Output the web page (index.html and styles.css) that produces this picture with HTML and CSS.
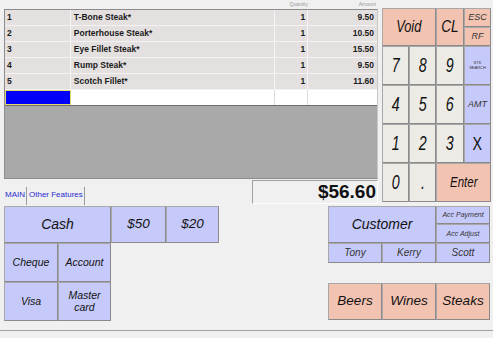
FILE: index.html
```html
<!DOCTYPE html>
<html lang="en">
<head>
  <meta charset="UTF-8" />
  <title>POS - Sale</title>
  <link rel="stylesheet" href="styles.css">
</head>
<body>
  <div class="top">
    <div class="sale">
      <div class="heads">
        <span class="h-qty">Quantity</span>
        <span class="h-amt">Amount</span>
      </div>
      <div class="grid-box">
        <div class="row"><span class="c-no">1</span><span class="c-name">T-Bone Steak*</span><span class="c-qty">1</span><span class="c-amt">9.50</span></div>
        <div class="row"><span class="c-no">2</span><span class="c-name">Porterhouse Steak*</span><span class="c-qty">1</span><span class="c-amt">10.50</span></div>
        <div class="row"><span class="c-no">3</span><span class="c-name">Eye Fillet Steak*</span><span class="c-qty">1</span><span class="c-amt">15.50</span></div>
        <div class="row"><span class="c-no">4</span><span class="c-name">Rump Steak*</span><span class="c-qty">1</span><span class="c-amt">9.50</span></div>
        <div class="row"><span class="c-no">5</span><span class="c-name">Scotch Fillet*</span><span class="c-qty">1</span><span class="c-amt">11.60</span></div>
        <div class="row new"><span class="c-no sel"></span><span class="c-name"></span><span class="c-qty"></span><span class="c-amt"></span></div>
        <div class="empty"></div>
      </div>
      <div class="status">
        <div class="tabs">
          <span class="tab">MAIN</span>
          <span class="tab">Other Features</span>
        </div>
        <div class="total">$56.60</div>
      </div>
    </div>

    <div class="keypad">
      <button class="key red void"><span>Void</span></button>
      <button class="key red cl"><span>CL</span></button>
      <div class="split">
        <button class="key red sm">ESC</button>
        <button class="key red sm">RF</button>
      </div>
      <button class="key num"><span>7</span></button>
      <button class="key num"><span>8</span></button>
      <button class="key num"><span>9</span></button>
      <button class="key blue tiny">STK<br>SEARCH</button>
      <button class="key num"><span>4</span></button>
      <button class="key num"><span>5</span></button>
      <button class="key num"><span>6</span></button>
      <button class="key blue amt">AMT</button>
      <button class="key num"><span>1</span></button>
      <button class="key num"><span>2</span></button>
      <button class="key num"><span>3</span></button>
      <button class="key blue x"><span>X</span></button>
      <button class="key num"><span>0</span></button>
      <button class="key num"><span>.</span></button>
      <button class="key red enter"><span>Enter</span></button>
    </div>
  </div>

  <div class="bottom">
    <div class="pay">
      <button class="key blue cash">Cash</button>
      <button class="key blue big">$50</button>
      <button class="key blue big">$20</button>
      <button class="key blue mid">Cheque</button>
      <button class="key blue mid">Account</button>
      <div class="gap-cell"></div>
      <div class="gap-cell"></div>
      <button class="key blue mid">Visa</button>
      <button class="key blue mid">Master<br>card</button>
    </div>

    <div class="cust">
      <button class="key blue customer">Customer</button>
      <button class="key blue acc">Acc Payment</button>
      <button class="key blue acc">Acc Adjust</button>
      <button class="key blue name">Tony</button>
      <button class="key blue name">Kerry</button>
      <button class="key blue name">Scott</button>
      <button class="key red cat">Beers</button>
      <button class="key red cat">Wines</button>
      <button class="key red cat">Steaks</button>
    </div>
  </div>

  <div class="footer"></div>
</body>
</html>
```

FILE: styles.css
```css
body {
  margin: 0;
  width: 493px;
  height: 338px;
  overflow: hidden;
  background-color: #f0f0f0;
  font-family: 'Liberation Sans', Arial, sans-serif;
  color: #111;
}
.top {
  display: flex;
  padding-left: 4px;
  height: 206px;
}
.sale {
  width: 374px;
  display: flex;
  flex-direction: column;
}
.heads {
  height: 9px;
  display: flex;
  font-size: 5px;
  color: #9a9a9a;
  line-height: 9px;
}
.h-qty {
  margin-left: 271px;
  width: 33px;
  text-align: right;
}
.h-amt {
  width: 68px;
  text-align: right;
}
.grid-box {
  border: 1px solid #8c8c8c;
  border-right-color: #c8c8c8;
  height: 168px;
  display: flex;
  flex-direction: column;
  background-color: #a9a9a9;
}
.row {
  display: flex;
  height: 15px;
  border-bottom: 1px solid #f4f2f2;
  background-color: #e4e0e0;
  font-size: 8.5px;
  font-weight: bold;
  line-height: 15px;
  color: #1a1a1a;
}
.row span {
  border-right: 1px solid #f6f4f4;
  box-sizing: border-box;
}
.c-no {
  width: 66px;
  padding-left: 2px;
}
.c-name {
  width: 205px;
  padding-left: 3px;
}
.c-qty {
  width: 33px;
  text-align: right;
  padding-right: 2px;
}
.c-amt {
  width: 69px;
  text-align: right;
  padding-right: 3px;
  border-right: none !important;
}
.row.new {
  background-color: #fff;
  border-bottom: 1px solid #6e6e6e;
}
.row.new span {
  border-right-color: #dcdcdc;
}
.c-no.sel {
  background-color: #0000f8;
  border: 1px solid #e2d870 !important;
}
.empty {
  flex: 1;
}
.status {
  display: flex;
  justify-content: space-between;
  align-items: flex-end;
  height: 26px;
}
.tabs {
  display: flex;
  height: 18px;
  font-size: 8px;
  color: #2a2ad0;
  line-height: 16px;
}
.tab {
  padding: 0 1px 0 1px;
  border-right: 1px solid #9a9a9a;
}
.tab + .tab {
  padding-left: 2px;
}
.total {
  width: 123px;
  height: 22px;
  border: 1px solid #a0a0a0;
  border-right-color: #fff;
  border-bottom-color: #fff;
  font-size: 19px;
  font-weight: bold;
  text-align: right;
  line-height: 22px;
  padding-right: 1px;
  margin-bottom: 1px;
}
.keypad {
  margin-left: 4px;
  margin-top: 8px;
  width: 109px;
  display: grid;
  grid-template-columns: 27px 27px 28px 27px;
  grid-template-rows: 38px 39px 39px 39px 39px;
  height: 194px;
}
.key {
  box-sizing: border-box;
  margin: 0;
  padding: 0;
  border: 1px solid #a8a8a8;
  border-right-color: #8a8a8a;
  border-bottom-color: #8a8a8a;
  font-family: 'Liberation Sans', Arial, sans-serif;
  font-style: italic;
  color: #111;
  line-height: 1.05;
}
.key span {
  display: inline-block;
}
.red {
  background-color: #f3c3b1;
}
.blue {
  background-color: #c6cafa;
}
.num {
  background-color: #ecebe6;
  font-size: 21px;
}
.num span {
  transform: scaleX(0.68);
}
.void {
  grid-column: span 2;
  font-size: 16px;
}
.void span,
.cl span {
  transform: scaleX(0.8);
}
.cl {
  font-size: 17px;
}
.split {
  display: grid;
  grid-template-rows: 1fr 1fr;
}
.sm {
  font-size: 9px;
  color: #333;
}
.tiny {
  font-size: 4px;
  font-style: normal;
  color: #333;
}
.amt {
  font-size: 9px;
  color: #333;
}
.x {
  font-size: 19px;
  font-style: normal;
}
.x span {
  transform: scaleX(0.75);
}
.enter {
  grid-column: span 2;
  font-size: 14px;
}
.enter span {
  transform: scaleX(0.82);
}
.bottom {
  display: flex;
  padding-left: 4px;
  height: 115px;
}
.pay {
  display: grid;
  grid-template-columns: 54px 53px 55px 53px;
  grid-template-rows: 37px 39px 39px;
}
.cash {
  grid-column: span 2;
  font-size: 14px;
}
.big {
  font-size: 13.5px;
}
.mid {
  font-size: 10.5px;
}
.gap-cell {
  background: transparent;
}
.cust {
  margin-left: 109px;
  display: grid;
  grid-template-columns: 54px 54px 54px;
  grid-template-rows: 18px 19px 20px 20px 37px;
}
.customer {
  grid-column: span 2;
  grid-row: span 2;
  font-size: 14px;
}
.acc {
  font-size: 7px;
  color: #333;
}
.cust .acc:nth-child(3) {
  grid-column: 3;
}
.name {
  font-size: 10px;
  color: #333;
}
.cat {
  grid-row: 5;
  font-size: 13.5px;
}
.footer {
  margin-top: 9px;
  border-top: 1px solid #a0a0a0;
  height: 8px;
}
```
